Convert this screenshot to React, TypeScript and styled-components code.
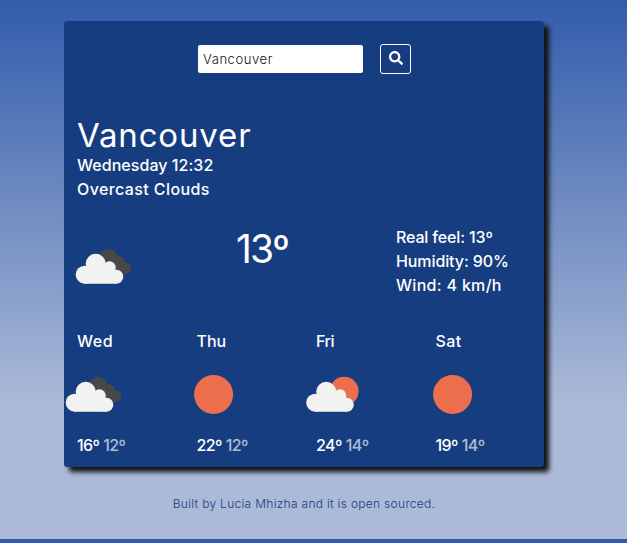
import React from "react";
import styled, { createGlobalStyle } from "styled-components";

const GlobalStyle = createGlobalStyle`
  * { box-sizing: border-box; }
  html { background: #325cab; }
  body { margin: 0; font-family: Inter, "Open Sans", sans-serif; }
`;

const Page = styled.div`
  height: 539px;
  padding: 21px 19px 0 0;
  display: flex;
  flex-direction: column;
  align-items: center;
  background: linear-gradient(to bottom, #325cab 0%, #abbad8 75%);
`;

const Card = styled.main`
  width: 480px;
  height: 446px;
  padding-top: 23px;
  border-radius: 3px;
  background: #163d80;
  color: #fff;
  box-shadow: 5px 5px 5px #111;
`;

const Text = styled.span<{ $track?: number }>`
  letter-spacing: ${({ $track = 0 }) => $track}px;
  white-space: nowrap;
`;

const SearchForm = styled.form`
  display: flex;
  align-items: center;
  gap: 17px;
  height: 30px;
  margin-left: 134px;
`;

const SearchInput = styled.input`
  width: 165px;
  height: 28px;
  padding: 0 5px;
  border: 0;
  border-radius: 2px;
  background: #fff;
  color: #111;
  font: 300 13px/28px Inter, sans-serif;
  letter-spacing: 0.58px;
  outline: none;
`;

const SearchButton = styled.button`
  width: 31px;
  height: 30px;
  padding: 0 0 2px;
  display: grid;
  place-items: center;
  border: 1px solid #fff;
  border-radius: 3px;
  background: transparent;
  color: #fff;
`;

const Heading = styled.header`
  margin: 37px 0 0 13px;
`;

const City = styled.h1`
  margin: 0;
  height: 42px;
  font-size: 33px;
  line-height: 48px;
  font-weight: 400;
`;

const Line = styled.div`
  height: 24px;
  font-size: 16px;
  line-height: 24px;
  font-weight: 450;
`;

const Current = styled.section`
  display: grid;
  grid-template-columns: 160px 160px 1fr;
  height: 72px;
  margin: 24px 0 0 12px;
`;

const IconSlot = styled.div`
  margin-left: -2px;
  padding-top: 20px;
`;

const Temperature = styled.div`
  font-size: 39px;
  line-height: 47px;
`;

const Forecast = styled.section`
  display: grid;
  grid-template-columns: repeat(4, 119.5px);
  margin-top: 32px;
`;

const Day = styled.article`
  display: grid;
  grid-template-rows: 24px 80px 24px;
`;

const DayText = styled.div`
  padding-left: 13px;
  font-size: 16px;
  line-height: 24px;
  font-weight: 450;
  white-space: nowrap;
`;

const DayIcon = styled.div`
  padding-top: 20px;
`;

const Low = styled(Text)`
  margin-left: 4px;
  opacity: 0.65;
`;

const Footer = styled.footer`
  margin-top: 28px;
  font-size: 12px;
  line-height: 18px;
  font-weight: 300;
  color: #163d80;
`;

type Kind = "clouds" | "sun" | "partly";

const Svg = styled.svg`
  display: block;
`;

function WhiteCloud({ shift = 0 }: { shift?: number }) {
  return (
    <g fill="#f2f2f1" transform={`translate(${shift} 0)`}>
      <circle cx="10.7" cy="29.7" r="9" />
      <circle cx="21.7" cy="18.8" r="10" />
      <circle cx="35.4" cy="22.7" r="6.4" />
      <circle cx="42.3" cy="31.7" r="7" />
      <path d="M10.7 38.7L12 21L30 16L36 24L42.3 30V38.7Z" />
    </g>
  );
}

function DarkCloud() {
  return (
    <g fill="#484849">
      <circle cx="34.3" cy="12.9" r="9.1" />
      <circle cx="44.4" cy="17" r="6" />
      <circle cx="51.2" cy="23.3" r="6" />
      <path d="M30 16L44 14L51 20V29.3H40Z" />
    </g>
  );
}

function WeatherIcon({ kind }: { kind: Kind }) {
  return (
    <Svg width="60" height="44" viewBox="0 0 60 44">
      {kind === "sun" && <circle cx="29.6" cy="21.5" r="19.5" fill="#ec6e4c" />}
      {kind === "partly" && <circle cx="41.2" cy="18.2" r="14.4" fill="#ec6e4c" />}
      {kind === "clouds" && <DarkCloud />}
      {kind !== "sun" && <WhiteCloud shift={kind === "partly" ? 1.5 : 0} />}
    </Svg>
  );
}

const days: { name: string; track: number; kind: Kind; high: string; low: string }[] = [
  { name: "Wed", track: 0.6, kind: "clouds", high: "16º", low: "12º" },
  { name: "Thu", track: 0, kind: "sun", high: "22º", low: "12º" },
  { name: "Fri", track: -0.4, kind: "partly", high: "24º", low: "14º" },
  { name: "Sat", track: 0.4, kind: "sun", high: "19º", low: "14º" },
];

export default function App() {
  return (
    <>
      <GlobalStyle />
      <Page>
        <Card>
          <SearchForm onSubmit={(e) => e.preventDefault()}>
            <SearchInput defaultValue="Vancouver" aria-label="City" />
            <SearchButton aria-label="Search">
              <svg width="14" height="14" viewBox="0 0 512 512" fill="currentColor">
                <path d="M505 442.7 405.3 343c-4.500-4.500-10.600-7-17-7H372c27.600-35.300 44-79.700 44-128C416 93.100 322.900 0 208 0S0 93.100 0 208s93.100 208 208 208c48.300 0 92.700-16.400 128-44v16.300c0 6.400 2.500 12.500 7 17l99.700 99.700c9.400 9.400 24.600 9.400 33.900 0l28.300-28.300c9.400-9.400 9.400-24.600.1-34zM208 336c-70.700 0-128-57.200-128-128 0-70.700 57.200-128 128-128 70.700 0 128 57.200 128 128 0 70.700-57.200 128-128 128z" />
              </svg>
            </SearchButton>
          </SearchForm>
          <Heading>
            <City><Text $track={0.85}>Vancouver</Text></City>
            <Line><Text $track={0.05}>Wednesday 12:32</Text></Line>
            <Line><Text $track={0.4}>Overcast Clouds</Text></Line>
          </Heading>
          <Current>
            <IconSlot><WeatherIcon kind="clouds" /></IconSlot>
            <Temperature><Text $track={-1.8}>13º</Text></Temperature>
            <div>
              <Line><Text $track={-0.15}>Real feel: 13º</Text></Line>
              <Line><Text $track={-0.1}>Humidity: 90%</Text></Line>
              <Line><Text $track={0.3}>Wind: 4 km/h</Text></Line>
            </div>
          </Current>
          <Forecast>
            {days.map((d) => (
              <Day key={d.name}>
                <DayText><Text $track={d.track}>{d.name}</Text></DayText>
                <DayIcon><WeatherIcon kind={d.kind} /></DayIcon>
                <DayText>
                  <Text $track={-0.6}>{d.high}</Text>
                  <Low $track={-0.6}>{d.low}</Low>
                </DayText>
              </Day>
            ))}
          </Forecast>
        </Card>
        <Footer><Text $track={0.3}>Built by Lucia Mhizha and it is open sourced.</Text></Footer>
      </Page>
    </>
  );
}
